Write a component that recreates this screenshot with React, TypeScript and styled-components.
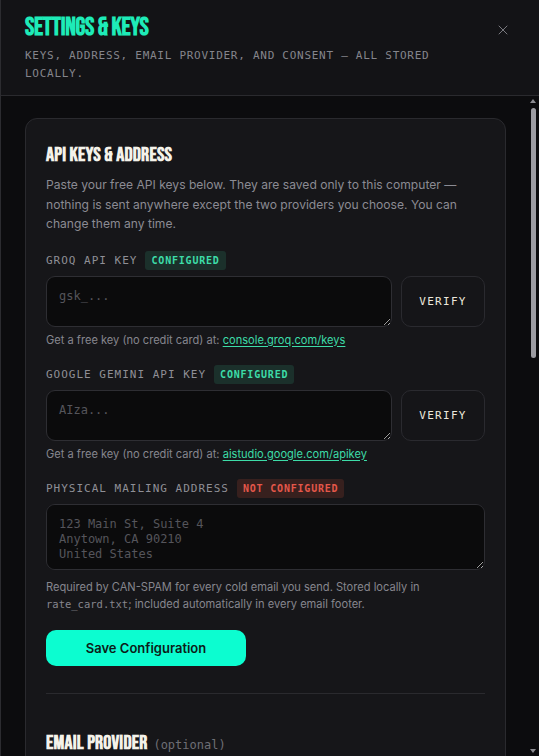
import React from "react";
import styled, { createGlobalStyle } from "styled-components";
import { X } from "lucide-react";

const GlobalStyle = createGlobalStyle`
  html, body {
    margin: 0;
    padding: 0;
    height: 100%;
    background: #0c0c0e;
    color-scheme: dark;
  }
  #root { height: 100%; }
  * { box-sizing: border-box; }
`;

const DISPLAY = `"Bebas Neue", "Liberation Sans Narrow", "DejaVu Sans Condensed", "Arial Narrow", sans-serif`;
const MONO = `"DejaVu Sans Mono", "Liberation Mono", monospace`;
const SANS = `Inter, "Noto Sans", sans-serif`;

const Modal = styled.div`
  height: 100vh;
  display: flex;
  flex-direction: column;
  border-left: 1px solid #2c2c30;
  background: #0c0c0e;
`;

const Header = styled.header`
  flex: none;
  height: 96px;
  display: flex;
  align-items: flex-start;
  justify-content: space-between;
  padding: 14px 24px 0 24px;
  background: #131316;
  border-bottom: 1px solid #2a2a2e;
`;

const HeaderText = styled.div`
  display: flex;
  flex-direction: column;
`;

const Title = styled.h1`
  margin: 0;
  font-family: ${DISPLAY};
  font-stretch: condensed;
  font-weight: 700;
  font-size: 25px;
  line-height: 28px;
  letter-spacing: -0.3px;
  color: #1eebb8;
`;

const Subtitle = styled.p`
  margin: 5px 0 0;
  max-width: 440px;
  font-family: ${MONO};
  font-size: 11px;
  line-height: 18px;
  letter-spacing: 0.73px;
  text-transform: uppercase;
  color: #85858c;
`;

const CloseButton = styled.button`
  margin-top: 4px;
  width: 24px;
  height: 24px;
  display: flex;
  align-items: center;
  justify-content: center;
  padding: 0;
  border: none;
  background: transparent;
  color: #8a8a90;
  cursor: pointer;
`;

/* Scroll area plus its rail */
const Main = styled.div`
  flex: 1;
  min-height: 0;
  display: flex;
`;

const Body = styled.div`
  flex: 1;
  min-width: 0;
  overflow: hidden;
  padding: 22px 18px 32px 24px;
`;

const Rail = styled.div`
  flex: none;
  width: 15px;
  display: flex;
  flex-direction: column;
  align-items: center;
  padding: 3px 0 1px 3px;
  background: #0c0c0e;
`;

const Arrow = styled.span<{ $down?: boolean }>`
  flex: none;
  width: 0;
  height: 0;
  border-left: 3.5px solid transparent;
  border-right: 3.5px solid transparent;
  ${(p) =>
    p.$down
      ? "border-top: 4px solid #8c8c92; margin-top: auto; margin-bottom: 2px;"
      : "border-bottom: 4px solid #8c8c92;"}
`;

const Thumb = styled.span`
  flex: none;
  margin-top: 5px;
  width: 5px;
  height: 250px;
  border-radius: 3px;
  background: #9d9da3;
`;

const Card = styled.section`
  background: #161619;
  border: 1px solid #2a2a2e;
  border-radius: 12px;
  padding: 24px 20px 28px 20px;
`;

const SectionTitle = styled.h2<{ $compact?: boolean }>`
  margin: 0;
  display: flex;
  align-items: baseline;
  gap: 6px;
  font-family: ${DISPLAY};
  font-stretch: condensed;
  font-weight: 700;
  font-size: 20px;
  line-height: ${(p) => (p.$compact ? 18 : 24)}px;
  letter-spacing: 0.2px;
  color: #f4f2ea;
`;

const Optional = styled.span`
  font-family: ${MONO};
  font-weight: 400;
  font-size: 12px;
  letter-spacing: 0;
  color: #6e6e75;
`;

const Lead = styled.p<{ $compact?: boolean }>`
  margin: ${(p) => (p.$compact ? 0 : 8)}px 0 0;
  font-family: ${SANS};
  font-size: 12.1px;
  line-height: 19.5px;
  color: #8b8b93;
`;

const Field = styled.div`
  margin-top: 16px;
  display: flex;
  flex-direction: column;
  &:first-of-type {
    margin-top: 17px;
  }
`;

const LabelRow = styled.div`
  display: flex;
  align-items: center;
  gap: 8px;
  height: 19px;
  margin-bottom: 6px;
`;

const Label = styled.label`
  font-family: ${MONO};
  font-size: 11px;
  line-height: 19px;
  letter-spacing: 1px;
  text-transform: uppercase;
  color: #8f8f96;
`;

const Badge = styled.span<{ $ok: boolean }>`
  display: inline-flex;
  align-items: center;
  height: 19px;
  padding: 0 6px;
  border-radius: 3px;
  font-family: ${MONO};
  font-weight: 700;
  font-size: 10px;
  letter-spacing: 0.8px;
  text-transform: uppercase;
  background: ${(p) => (p.$ok ? "#1b302b" : "#37201e")};
  color: ${(p) => (p.$ok ? "#3ddca8" : "#e4574a")};
`;

const InputRow = styled.div`
  display: grid;
  grid-template-columns: 1fr 84px;
  gap: 9px;
`;

const TextArea = styled.textarea<{ $rows: number }>`
  display: block;
  width: 100%;
  height: ${(p) => (p.$rows > 1 ? 66 : 51)}px;
  padding: 12px 12px;
  background: #0b0b0c;
  border: 1px solid #2e2e33;
  border-radius: 9px;
  color: #e8e8ea;
  font-family: ${MONO};
  font-size: 12px;
  line-height: 15px;
  outline: none;
  resize: vertical;
  &::placeholder {
    color: #55555b;
  }
`;

const TextInput = styled.input`
  display: block;
  width: 100%;
  height: 40px;
  padding: 0 12px;
  background: #0b0b0c;
  border: 1px solid #2e2e33;
  border-radius: 9px;
  color: #e8e8ea;
  font-family: ${MONO};
  font-size: 12px;
  outline: none;
  &::placeholder {
    color: #55555b;
  }
`;

const VerifyButton = styled.button`
  height: 51px;
  border: 1px solid #2a2a2f;
  border-radius: 10px;
  background: #151518;
  color: #ece8dc;
  font-family: ${MONO};
  font-size: 11px;
  letter-spacing: 1.3px;
  cursor: pointer;
`;

const Hint = styled.p<{ $gap?: number }>`
  margin: ${(p) => p.$gap ?? 5}px 0 0;
  font-family: ${SANS};
  font-size: 11.1px;
  line-height: 17px;
  color: #86868e;
`;

const Link = styled.a`
  color: #3ddca8;
  text-decoration: underline;
  text-underline-offset: 2px;
`;

const Code = styled.code`
  font-family: ${MONO};
  font-size: 10.5px;
`;

const SaveButton = styled.button`
  margin-top: 17px;
  width: 200px;
  height: 36px;
  border: none;
  border-radius: 10px;
  background: #0cfdd0;
  color: #0c1c18;
  font-family: ${SANS};
  font-size: 13px;
  font-weight: 600;
  cursor: pointer;
`;

const Divider = styled.hr<{ $after?: number }>`
  margin: 27px 0 ${(p) => p.$after ?? 36}px;
  border: none;
  border-top: 1px solid #2a2a2e;
`;

const CheckRow = styled.label`
  margin-top: 16px;
  display: flex;
  gap: 10px;
  align-items: flex-start;
  font-family: ${SANS};
  font-size: 12px;
  line-height: 19px;
  color: #b4b4ba;
`;

const Check = styled.input`
  margin: 3px 0 0;
  width: 14px;
  height: 14px;
  accent-color: #0cfdd0;
`;

type KeyField = {
  label: string;
  placeholder: string;
  linkText: string;
  href: string;
};

const keyFields: KeyField[] = [
  {
    label: "Groq API Key",
    placeholder: "gsk_...",
    linkText: "console.groq.com/keys",
    href: "https://console.groq.com/keys",
  },
  {
    label: "Google Gemini API Key",
    placeholder: "AIza...",
    linkText: "aistudio.google.com/apikey",
    href: "https://aistudio.google.com/apikey",
  },
];

const providerFields = [
  { label: "Provider", placeholder: "SMTP" },
  { label: "From Address", placeholder: "you@yourdomain.com" },
  { label: "SMTP Host", placeholder: "smtp.gmail.com" },
  { label: "SMTP Port", placeholder: "587" },
];

export default function App() {
  return (
    <>
      <GlobalStyle />
      <Modal>
        <Header>
          <HeaderText>
            <Title>Settings &amp; Keys</Title>
            <Subtitle>
              Keys, address, email provider, and consent — all stored locally.
            </Subtitle>
          </HeaderText>
          <CloseButton aria-label="Close">
            <X size={16} strokeWidth={1.3} />
          </CloseButton>
        </Header>
        <Main>
          <Body>
            <Card>
              <SectionTitle>API Keys &amp; Address</SectionTitle>
              <Lead>
                Paste your free API keys below. They are saved only to this
                computer — nothing is sent anywhere except the two providers
                you choose. You can change them any time.
              </Lead>

              {keyFields.map((f) => (
                <Field key={f.label}>
                  <LabelRow>
                    <Label>{f.label}</Label>
                    <Badge $ok>Configured</Badge>
                  </LabelRow>
                  <InputRow>
                    <TextArea $rows={1} placeholder={f.placeholder} />
                    <VerifyButton>VERIFY</VerifyButton>
                  </InputRow>
                  <Hint>
                    Get a free key (no credit card) at:{" "}
                    <Link href={f.href}>{f.linkText}</Link>
                  </Hint>
                </Field>
              ))}

              <Field>
                <LabelRow>
                  <Label>Physical Mailing Address</Label>
                  <Badge $ok={false}>Not Configured</Badge>
                </LabelRow>
                <TextArea
                  $rows={3}
                  placeholder={"123 Main St, Suite 4\nAnytown, CA 90210\nUnited States"}
                />
                <Hint $gap={9}>
                  Required by CAN-SPAM for every cold email you send. Stored
                  locally in <Code>rate_card.txt</Code>; included automatically
                  in every email footer.
                </Hint>
              </Field>

              <SaveButton>Save Configuration</SaveButton>

              <Divider $after={40} />

              <SectionTitle $compact>
                Email Provider <Optional>(optional)</Optional>
              </SectionTitle>
              <Lead $compact>
                Configure a sending provider to deliver emails directly from
                the app. For Gmail, use an app password instead of your main
                password.
              </Lead>

              {providerFields.map((f) => (
                <Field key={f.label}>
                  <LabelRow>
                    <Label>{f.label}</Label>
                  </LabelRow>
                  <TextInput placeholder={f.placeholder} />
                </Field>
              ))}

              <Divider />

              <SectionTitle>Consent</SectionTitle>
              <CheckRow>
                <Check type="checkbox" />
                Every email includes my mailing address and a working
                unsubscribe link.
              </CheckRow>
            </Card>
          </Body>
          <Rail aria-hidden="true">
            <Arrow />
            <Thumb />
            <Arrow $down />
          </Rail>
        </Main>
      </Modal>
    </>
  );
}
